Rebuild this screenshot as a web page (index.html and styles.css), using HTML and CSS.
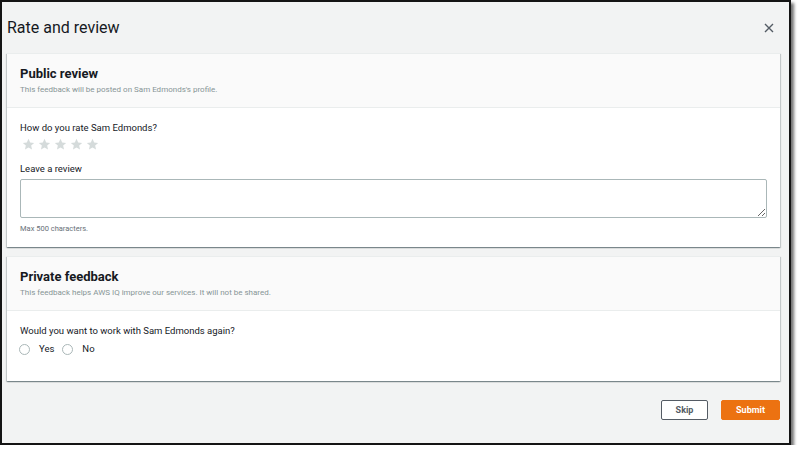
FILE: index.html
```html
<!DOCTYPE html>
<html>
<head>
  <link rel="stylesheet" href="styles.css">
</head>

<body>
  <div class="frame">
    <div class="modal">
      <div class="modal-head">
        <h1>Rate and review</h1>
        <button class="close" type="button">
          <svg width="10" height="10" viewBox="0 0 10 10"><path d="M1 1 L9 9 M9 1 L1 9" stroke="#545b64" stroke-width="1.4" fill="none" /></svg>
        </button>
      </div>

      <div class="modal-body">
        <section class="panel">
          <div class="panel-head">
            <h2>Public review</h2>
            <p>This feedback will be posted on Sam Edmonds's profile.</p>
          </div>
          <div class="panel-body">
            <div class="label">How do you rate Sam Edmonds?</div>
            <div class="stars">
              <svg viewBox="0 0 24 24"><path d="M12 1.5 L15.1 8.3 L22.5 9 L16.9 14 L18.5 21.3 L12 17.5 L5.5 21.3 L7.1 14 L1.5 9 L8.9 8.3 Z" /></svg>
              <svg viewBox="0 0 24 24"><path d="M12 1.5 L15.1 8.3 L22.5 9 L16.9 14 L18.5 21.3 L12 17.5 L5.5 21.3 L7.1 14 L1.5 9 L8.9 8.3 Z" /></svg>
              <svg viewBox="0 0 24 24"><path d="M12 1.5 L15.1 8.3 L22.5 9 L16.9 14 L18.5 21.3 L12 17.5 L5.5 21.3 L7.1 14 L1.5 9 L8.9 8.3 Z" /></svg>
              <svg viewBox="0 0 24 24"><path d="M12 1.5 L15.1 8.3 L22.5 9 L16.9 14 L18.5 21.3 L12 17.5 L5.5 21.3 L7.1 14 L1.5 9 L8.9 8.3 Z" /></svg>
              <svg viewBox="0 0 24 24"><path d="M12 1.5 L15.1 8.3 L22.5 9 L16.9 14 L18.5 21.3 L12 17.5 L5.5 21.3 L7.1 14 L1.5 9 L8.9 8.3 Z" /></svg>
            </div>
            <div class="label review-label">Leave a review</div>
            <textarea class="review"></textarea>
            <div class="hint">Max 500 characters.</div>
          </div>
        </section>

        <section class="panel">
          <div class="panel-head">
            <h2>Private feedback</h2>
            <p>This feedback helps AWS IQ improve our services. It will not be shared.</p>
          </div>
          <div class="panel-body private">
            <div class="label">Would you want to work with Sam Edmonds again?</div>
            <div class="radios">
              <label class="radio"><span class="dot"></span>Yes</label>
              <label class="radio"><span class="dot"></span>No</label>
            </div>
          </div>
        </section>
      </div>

      <div class="modal-foot">
        <button class="btn skip" type="button">Skip</button>
        <button class="btn submit" type="button">Submit</button>
      </div>
    </div>
  </div>
</body>
</html>
```

FILE: styles.css
```css
body {
  margin: 0;
  background: #fff;
  font-family: Roboto, "Open Sans", sans-serif;
  color: #16191f;
}

.frame {
  width: 787px;
  height: 441px;
  border: 2px solid #141414;
  box-shadow: 3px 3px 3px rgba(0, 0, 0, 0.55);
  background: #f2f3f3;
}

.modal {
  display: flex;
  flex-direction: column;
  height: 100%;
}

.modal-head {
  display: flex;
  align-items: center;
  justify-content: space-between;
  height: 51px;
  padding: 0 9px 0 5px;
}

.modal-head h1 {
  margin: 0;
  font-size: 16px;
  font-weight: 400;
}

.close {
  border: none;
  background: none;
  padding: 0;
  width: 12px;
  height: 12px;
  display: flex;
  align-items: center;
  justify-content: center;
  margin-right: 5px;
}

.modal-body {
  display: flex;
  flex-direction: column;
  gap: 9px;
  padding: 0 9px 0 5px;
}

.panel {
  background: #fff;
  box-shadow: 0 1px 1px rgba(0, 28, 36, 0.3), 1px 1px 1px rgba(0, 28, 36, 0.15), -1px 1px 1px rgba(0, 28, 36, 0.15);
  border-top: 1px solid #eaeded;
}

.panel-head {
  background: #fafafa;
  border-bottom: 1px solid #eaeded;
  padding: 12px 13px 11px;
}

.panel-head h2 {
  margin: 0;
  font-size: 13px;
  line-height: 16px;
  font-weight: 700;
}

.panel-head p {
  margin: 2px 0 0;
  font-size: 8px;
  line-height: 12px;
  color: #879596;
}

.panel-body {
  padding: 13px 13px 13px;
}

.label {
  font-size: 9.5px;
  line-height: 13px;
}

.stars {
  display: flex;
  gap: 3px;
  margin-top: 4px;
  padding-left: 2px;
}

.stars svg {
  width: 13px;
  height: 13px;
  fill: #d5dbdb;
}

.review-label {
  margin-top: 11px;
}

.review {
  display: block;
  box-sizing: border-box;
  width: 100%;
  height: 39px;
  margin-top: 4px;
  border: 1px solid #aab7b8;
  border-radius: 2px;
  resize: vertical;
}

.hint {
  margin-top: 5px;
  font-size: 7.5px;
  line-height: 11px;
  color: #687078;
}

.private {
  padding-bottom: 25px;
}

.radios {
  display: flex;
  gap: 8px;
  margin-top: 5px;
  margin-left: -1px;
}

.radio {
  display: flex;
  align-items: center;
  gap: 9px;
  font-size: 9.5px;
  line-height: 14px;
}

.dot {
  width: 9px;
  height: 9px;
  border: 1px solid #aab7b8;
  border-radius: 50%;
}

.modal-foot {
  display: flex;
  justify-content: flex-end;
  gap: 13px;
  padding: 19px 9px 0 0;
}

.btn {
  height: 20px;
  border-radius: 2px;
  font-family: inherit;
  font-size: 9px;
  font-weight: 700;
  padding: 0;
  cursor: pointer;
}

.skip {
  width: 47px;
  background: #fff;
  border: 1px solid #545b64;
  color: #545b64;
}

.submit {
  width: 59px;
  background: #ec7211;
  border: 1px solid #ec7211;
  color: #fff;
}
```
